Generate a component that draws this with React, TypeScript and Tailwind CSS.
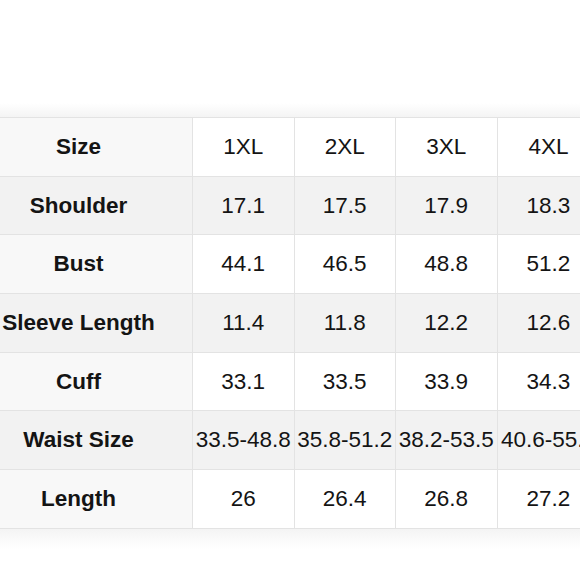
const sizes = ['1XL', '2XL', '3XL', '4XL'];

const rows: { label: string; values: string[] }[] = [
  { label: 'Shoulder', values: ['17.1', '17.5', '17.9', '18.3'] },
  { label: 'Bust', values: ['44.1', '46.5', '48.8', '51.2'] },
  { label: 'Sleeve Length', values: ['11.4', '11.8', '12.2', '12.6'] },
  { label: 'Cuff', values: ['33.1', '33.5', '33.9', '34.3'] },
  { label: 'Waist Size', values: ['33.5-48.8', '35.8-51.2', '38.2-53.5', '40.6-55.9'] },
  { label: 'Length', values: ['26', '26.4', '26.8', '27.2'] },
];

function Row({ label, values, shaded }: { label: string; values: string[]; shaded: boolean }) {
  return (
    <div className={`flex h-[58.7px] border-b border-[#e3e3e3] ${shaded ? 'bg-[#f2f2f2]' : 'bg-white'}`}>
      <div className={`w-[193px] shrink-0 flex items-center justify-center pr-[35px] border-r border-[#e3e3e3] font-bold whitespace-nowrap ${shaded ? 'bg-[#f2f2f2]' : 'bg-[#f8f8f8]'}`}>
        {label}
      </div>
      {values.map((v, i) => (
        <div
          key={i}
          className={`shrink-0 flex items-center justify-center whitespace-nowrap ${i === 3 ? 'w-[102px]' : 'w-[101.5px] border-r border-[#e3e3e3]'}`}
        >
          {v}
        </div>
      ))}
    </div>
  );
}

export default function App() {
  return (
    <div className="w-[580px] h-[580px] bg-white overflow-hidden text-[22.5px] text-[#141414] font-['Liberation_Sans',Arial,sans-serif]">
      <div className="h-[103px]" />
      <div className="h-[14px] bg-gradient-to-b from-white to-[#f4f4f4]" />
      <div className="w-[600px] border-t border-[#e3e3e3]">
        <Row label="Size" values={sizes} shaded={false} />
        {rows.map((r, i) => (
          <Row key={r.label} label={r.label} values={r.values} shaded={i % 2 === 0} />
        ))}
      </div>
      <div className="h-[20px] bg-gradient-to-b from-[#f4f4f4] to-white" />
    </div>
  );
}
